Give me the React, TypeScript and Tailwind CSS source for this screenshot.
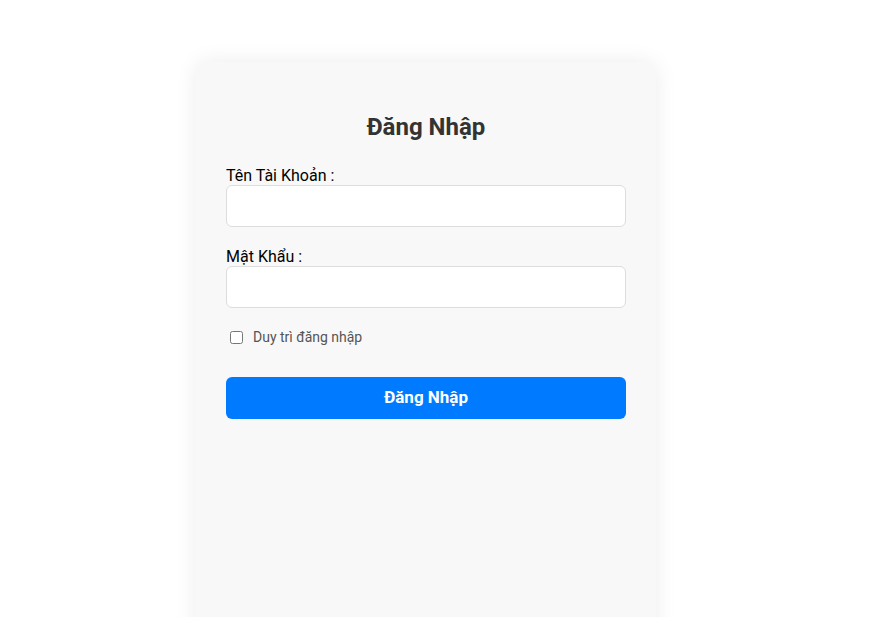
const LoginCard = () => {
  return (
    <div className="w-[460px] h-[600px] ml-[196px] bg-[#f8f8f8] rounded-xl shadow-[0_0_22px_rgba(0,0,0,0.08)] px-[30px] pt-[47px]">
      {/* Title */}
      <h2 className="text-center text-[24px] leading-9 font-bold text-[#333] mb-[21px]">
        Đăng Nhập
      </h2>

      {/* Username */}
      <div className="mb-5">
        <label className="block text-base leading-[19px] text-black">Tên Tài Khoản :</label>
        <input
          type="text"
          className="block w-full h-[42px] bg-white border border-[#dddddd] rounded-md px-3 outline-none"
        />
      </div>

      {/* Password */}
      <div>
        <label className="block text-base leading-[19px] text-black">Mật Khẩu :</label>
        <input
          type="password"
          className="block w-full h-[42px] bg-white border border-[#dddddd] rounded-md px-3 outline-none"
        />
      </div>

      {/* Remember me */}
      <div className="flex items-center h-5 mt-[19px] pl-1">
        <input type="checkbox" className="w-[13px] h-[13px] m-0" />
        <span className="ml-[10px] text-sm leading-5 text-[#555]">Duy trì đăng nhập</span>
      </div>

      {/* Submit */}
      <button className="mt-[30px] w-full h-[42px] bg-[#007bff] rounded-md text-white text-[17px] font-bold">
        Đăng Nhập
      </button>
    </div>
  );
};

export default function App() {
  return (
    <div className="min-h-screen bg-white pt-[62px] font-['Roboto',sans-serif]">
      <LoginCard />
    </div>
  );
}
